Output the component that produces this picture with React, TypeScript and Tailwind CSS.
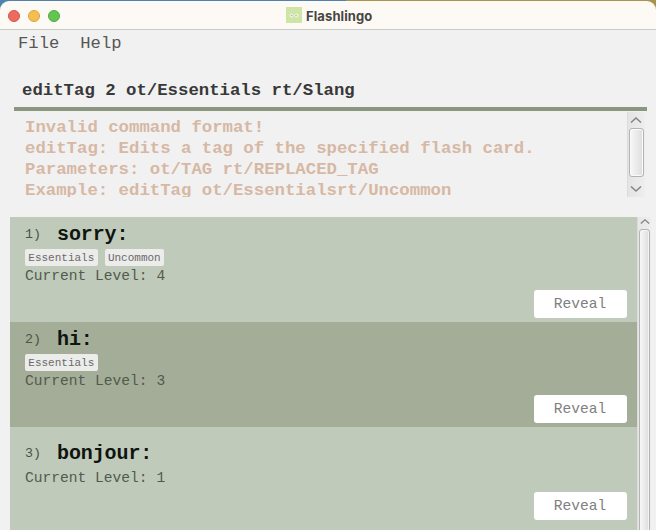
import React from "react";

const mono = "font-['Liberation_Mono','Courier_New',monospace]";

type Card = { index: number; word: string; tags: string[]; level: number };

const cards: Card[] = [
  { index: 1, word: "sorry:", tags: ["Essentials", "Uncommon"], level: 4 },
  { index: 2, word: "hi:", tags: ["Essentials"], level: 3 },
  { index: 3, word: "bonjour:", tags: [], level: 1 },
];

function TitleBar() {
  return (
    <header className="shrink-0 bg-[linear-gradient(to_right,#4f83ad_0_346px,#a8954c_346px)] pt-px">
      <div className="flex h-[29px] items-center rounded-t-[9px] bg-[#fdf9f4] pl-2 shadow-[inset_0_-1px_0_#c9cbc6]">
        <div className="flex gap-2">
          <span className="size-3 rounded-full border border-[#d9554a] bg-[#ed6a5e]" />
          <span className="size-3 rounded-full border border-[#dba43d] bg-[#f5bf4f]" />
          <span className="size-3 rounded-full border border-[#50ad3f] bg-[#61c554]" />
        </div>
        <div className="ml-[226px] flex items-center gap-1">
          <svg width="16" height="16" viewBox="0 0 16 16" className="-mt-0.5">
            <rect width="16" height="16" fill="#cfe5a5" />
            <ellipse cx="5.5" cy="8.5" rx="2.1" ry="1.9" fill="#eef1e2" />
            <ellipse cx="10.5" cy="8.5" rx="2.1" ry="1.9" fill="#eef1e2" />
            <circle cx="5.7" cy="8.5" r="0.8" fill="#a9b3a4" />
            <circle cx="10.1" cy="8.5" r="0.8" fill="#a9b3a4" />
            <path d="M7.3 10h1.4L8 11z" fill="#e6d09a" />
          </svg>
          <span className="font-['Inter',sans-serif] text-[13px] leading-4 font-bold tracking-[0.1px] text-[#474543]">Flashlingo</span>
        </div>
      </div>
    </header>
  );
}

function Chevron({ down = false, size = 12 }: { down?: boolean; size?: number }) {
  return (
    <svg width={size} height={size / 2} viewBox="0 0 12 6" fill="none" stroke="#858585" strokeWidth="1.5">
      <path d={down ? "M1 0.5 6 5 11 0.5" : "M1 5.5 6 1 11 5.5"} />
    </svg>
  );
}

function ResultDisplay() {
  return (
    <section className="mr-[11px] ml-[14px] flex h-[85px] shrink-0">
      <pre className={`${mono} min-w-0 flex-1 overflow-hidden pt-[5px] pl-[11px] text-[17.33px] leading-[21px] font-bold text-[#d6b8a4]`}>
        {"Invalid command format!\neditTag: Edits a tag of the specified flash card.\nParameters: ot/TAG rt/REPLACED_TAG\nExample: editTag ot/Essentialsrt/Uncommon"}
      </pre>
      <div className="flex w-[18px] shrink-0 flex-col items-center border-l border-[#dcdcdc] bg-linear-to-r from-[#e4e4e4] to-[#eeeeee] pr-px">
        <div className="flex h-4 shrink-0 items-center"><Chevron /></div>
        <div className="h-[49px] w-[15px] shrink-0 rounded-[3px] border border-[#b3b3b3] bg-linear-to-r from-[#f8f8f8] to-[#dddddd] shadow-[inset_0_0_0_1px_#fafafa]" />
        <div className="flex shrink-0 pt-[9px]"><Chevron down /></div>
      </div>
    </section>
  );
}

function CardRow({ card }: { card: Card }) {
  const even = card.index % 2 === 0;
  const tagged = card.tags.length > 0;
  return (
    <article className={`${mono} flex shrink-0 flex-col pl-[15px] ${even ? "bg-[#a4ad97]" : "bg-[#bfcaba]"} ${tagged ? "h-[105px] pt-1.5" : "h-[108px] pt-[15px]"}`}>
      <div className="flex h-6 items-center">
        <span className="w-8 text-[13.33px] text-[#4c5348]">{card.index})</span>
        <span className="text-[20px] font-bold tracking-[-0.1px] text-[#10140f]">{card.word}</span>
      </div>
      {tagged && (
        <div className="mt-0.5 flex gap-[7px]">
          {card.tags.map((tag) => (
            <span key={tag} className="h-[17px] rounded-[2px] bg-[#ececeb] px-[3.3px] pt-px text-[11px] leading-4 text-[#6a6a6a]">{tag}</span>
          ))}
        </div>
      )}
      <div className={`h-5 text-[14.6px] leading-5 text-[#525a4e] ${tagged ? "" : "mt-0.5"}`}>Current Level: {card.level}</div>
      <button className="mt-1 mr-[10px] h-7 w-[93px] self-end rounded-[3px] bg-white pt-px pr-px text-[14.6px] text-[#808080]">Reveal</button>
    </article>
  );
}

export default function App() {
  return (
    <main className="flex h-[530px] w-[656px] flex-col overflow-hidden bg-[#f1f1f1]">
      <TitleBar />
      <nav className={`${mono} flex h-[27px] shrink-0 items-center gap-[21px] pl-[18px] text-[17.2px] text-[#575757]`}>
        <span>File</span>
        <span>Help</span>
      </nav>
      <div className={`${mono} mt-[18px] mr-[9px] ml-[14px] flex h-9 shrink-0 items-center border-b-4 border-[#8a967d] pl-2 text-[17.33px] font-bold text-[#383838]`}>
        editTag 2 ot/Essentials rt/Slang
      </div>
      <div className="h-px shrink-0" />
      <ResultDisplay />
      <section className="mt-5 mr-[5px] ml-[10px] flex min-h-0 flex-1 overflow-hidden">
        <div className="flex min-w-0 flex-1 flex-col overflow-hidden">
          {cards.map((card) => <CardRow key={card.index} card={card} />)}
        </div>
        <div className="flex w-[14px] shrink-0 flex-col items-center border-l border-[#dcdcdc] bg-linear-to-r from-[#e6e6e6] to-[#eeeeee]">
          <div className="flex h-3 shrink-0 items-start pt-0.5"><Chevron size={10} /></div>
          <div className="-mb-2 w-[11px] flex-1 rounded-[3px] border border-[#b3b3b3] bg-linear-to-r from-[#f8f8f8] to-[#dddddd] shadow-[inset_0_0_0_1px_#f5f5f5]" />
        </div>
      </section>
    </main>
  );
}
